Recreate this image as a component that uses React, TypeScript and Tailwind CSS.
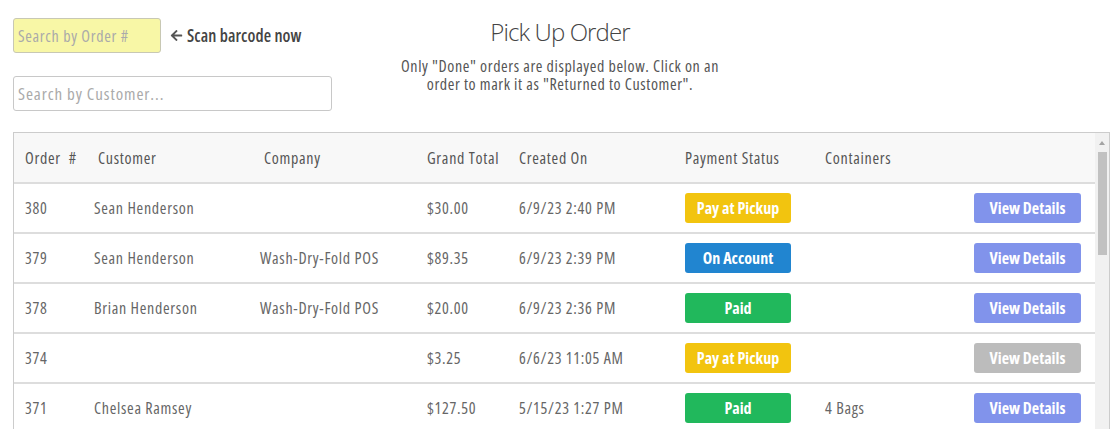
import { FaArrowLeft } from 'react-icons/fa';

type Row = {
  id: string;
  customer: string;
  company: string;
  total: string;
  created: string;
  status: 'pickup' | 'account' | 'paid';
  containers: string;
  disabled?: boolean;
};

const rows: Row[] = [
  { id: '380', customer: 'Sean Henderson', company: '', total: '$30.00', created: '6/9/23 2:40 PM', status: 'pickup', containers: '' },
  { id: '379', customer: 'Sean Henderson', company: 'Wash-Dry-Fold POS', total: '$89.35', created: '6/9/23 2:39 PM', status: 'account', containers: '' },
  { id: '378', customer: 'Brian Henderson', company: 'Wash-Dry-Fold POS', total: '$20.00', created: '6/9/23 2:36 PM', status: 'paid', containers: '' },
  { id: '374', customer: '', company: '', total: '$3.25', created: '6/6/23 11:05 AM', status: 'pickup', containers: '', disabled: true },
  { id: '371', customer: 'Chelsea Ramsey', company: '', total: '$127.50', created: '5/15/23 1:27 PM', status: 'paid', containers: '4 Bags' },
];

const statusLabel = {
  pickup: 'Pay at Pickup',
  account: 'On Account',
  paid: 'Paid',
};

const statusClass = {
  pickup: 'bg-[#f2c40f]',
  account: 'bg-[#2185d0]',
  paid: 'bg-[#21b85c]',
};

const cols = 'grid grid-cols-[69px_166px_167px_92px_166px_140px_149px_1fr] items-center';

export default function App() {
  return (
    <div className="font-['Open_Sans',sans-serif] font-stretch-[75%] tracking-[0.7px] text-[#555] bg-white min-h-screen">
      {/* top area */}
      <div className="flex px-[13px] pt-[18px]">
        <div className="flex flex-col gap-[23px] w-[340px]">
          <div className="flex items-center">
            <input
              placeholder="Search by Order #"
              className="w-[148px] h-[35px] px-[4px] text-[16px] tracking-[0.7px] bg-[#f8f7a6] border border-[#c8c8b4] rounded-[3px] placeholder:text-[#aaa] outline-none"
            />
            <FaArrowLeft size={13} className="ml-[9px] text-[#555]" />
            <span className="ml-[4px] text-[17px] tracking-[0.1px] font-semibold text-[#444]">Scan barcode now</span>
          </div>
          <input
            placeholder="Search by Customer..."
            className="w-[319px] h-[35px] px-[4px] text-[17px] tracking-[0.9px] bg-white border border-[#c8c8c8] rounded-[3px] placeholder:text-[#aaa] outline-none"
          />
        </div>
        <div className="flex flex-col items-center ml-[24px] w-[366px]">
          <h1 className="text-[24px] font-light font-stretch-100% tracking-[-0.9px] text-[#444] leading-[28px]">Pick Up Order</h1>
          <p className="text-center text-[16px] tracking-[0.6px] leading-[18px] text-[#555] mt-[11px]">
            Only "Done" orders are displayed below. Click on an
            <br />
            order to mark it as "Returned to Customer".
          </p>
        </div>
      </div>

      {/* table */}
      <div className="ml-[13px] mr-[1px] mt-[21px] border border-[#ccc] flex">
        <div className="flex-1 flex flex-col">
          <div className={`${cols} h-[49px] bg-[#f8f8f8] pl-[11px] text-[16px] text-[#555]`}>
            <div>
              Order<span className="ml-[8px]">#</span>
            </div>
            <div className="pl-[4px]">Customer</div>
            <div className="pl-[4px]">Company</div>
            <div>Grand Total</div>
            <div>Created On</div>
            <div>Payment Status</div>
            <div>Containers</div>
            <div></div>
          </div>
          {rows.map((r) => (
            <div key={r.id} className={`${cols} h-[50px] border-t-2 border-[#ddd] pl-[11px] text-[16px] text-[#666]`}>
              <div>{r.id}</div>
              <div>{r.customer}</div>
              <div>{r.company}</div>
              <div>{r.total}</div>
              <div>{r.created}</div>
              <div>
                <span className={`flex items-center justify-center w-[106px] h-[30px] rounded-[3px] text-white font-bold tracking-normal text-[16px] ${statusClass[r.status]}`}>
                  {statusLabel[r.status]}
                </span>
              </div>
              <div>{r.containers}</div>
              <div>
                <button
                  className={`w-[107px] h-[30px] rounded-[3px] text-white font-bold tracking-normal text-[16px] ${r.disabled ? 'bg-[#bcbcbc]' : 'bg-[#8193eb]'}`}
                >
                  View Details
                </button>
              </div>
            </div>
          ))}
        </div>
        {/* scrollbar */}
        <div className="w-[14px] bg-[#f1f1f1] flex flex-col items-center">
          <svg width="8" height="6" viewBox="0 0 8 6" className="mt-[7px]">
            <path d="M4 1 L7 5 L1 5 Z" fill="#a3a3a3" />
          </svg>
          <div className="mt-[6px] w-[9px] h-[103px] bg-[#c1c1c1]" />
        </div>
      </div>
    </div>
  );
}
